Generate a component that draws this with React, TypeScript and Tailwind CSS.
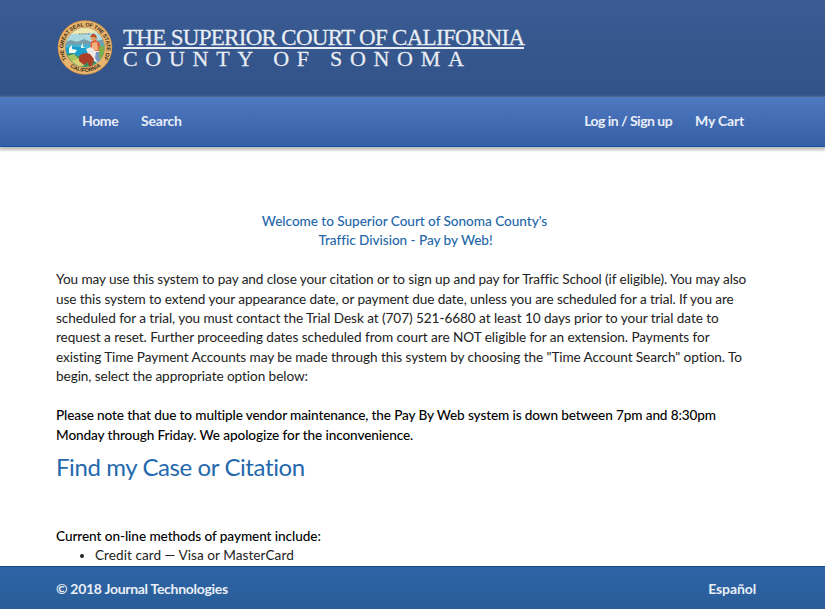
const intro = [
  { text: 'You may use this system to pay and close your citation or to sign up and pay for Traffic School (if eligible). You may also', tracking: 'tracking-[-0.092px]' },
  { text: 'use this system to extend your appearance date, or payment due date, unless you are scheduled for a trial. If you are', tracking: 'tracking-[-0.085px]' },
  { text: 'scheduled for a trial, you must contact the Trial Desk at (707) 521-6680 at least 10 days prior to your trial date to', tracking: 'tracking-[-0.068px]' },
  { text: 'request a reset. Further proceeding dates scheduled from court are NOT eligible for an extension. Payments for', tracking: 'tracking-[-0.055px]' },
  { text: 'existing Time Payment Accounts may be made through this system by choosing the "Time Account Search" option. To', tracking: 'tracking-[-0.08px]' },
  { text: 'begin, select the appropriate option below:', tracking: 'tracking-[-0.07px]' },
];

function Seal() {
  return (
    <svg viewBox="0 0 56 56" className="h-14 w-14 shrink-0">
      <defs>
        <clipPath id="scene"><circle cx="28" cy="27.5" r="19.4" /></clipPath>
        <path id="topArc" d="M9.7 39.5 A21.6 21.6 0 1 1 46.3 39.5" />
        <path id="bottomArc" d="M11.5 45.5 A24.5 24.5 0 0 0 44.5 45.5" />
      </defs>
      <circle cx="28" cy="27.5" r="27.3" fill="#c58b46" />
      <circle cx="28" cy="27.5" r="26.6" fill="#e9b46c" />
      <circle cx="28" cy="27.5" r="19.9" fill="#a97c3c" />
      <g clipPath="url(#scene)">
        <rect width="56" height="56" fill="#b9dfe5" />
        <path d="M8 6H48V15Q37 11 28 14T8 20Z" fill="#eee7b0" />
        <path d="M8 17Q18 11 28 16T48 15V22H8Z" fill="#a9d8df" />
        <path d="M8 22L14 20L20 22L27 19L34 22L48 19V27H8Z" fill="#779eaa" />
        <path d="M8 24.500H48V40H8Z" fill="#43b5d4" />
        <path d="M8 28Q20 25 31 29L29 36L8 35Z" fill="#1b9fc9" />
        <path d="M12 28L15 25V29L20 30L18 33H12Z" fill="#f4faf2" />
        <path d="M24 26L26 23V27L29 28H24Z" fill="#e7f5ef" />
        <path d="M8 34Q17 32 22 37L30 36L48 32V50H8Z" fill="#378e62" />
        <path d="M10 36L17 34L22 39L17 44Z" fill="#a9c45a" />
        <path d="M15 41L23 38L28 45L22 47Z" fill="#d8d176" />
        <path d="M34 22L38 19L43 24L44 33L39 39L32 34Z" fill="#e75b39" />
        <path d="M35 23L40 22L41 30L35 31Z" fill="#f1b27f" />
        <circle cx="36.500" cy="17.500" r="3" fill="#dca268" />
        <path d="M33.500 16Q36.500 11 39.500 16V20L38 17H33.500Z" fill="#b9522b" />
        <path d="M29 29L34 27L38 31L43 31L46 37L40 43L33 38Z" fill="#edeae5" />
        <path d="M39 32L44 32L46 38L41 43L38 38Z" fill="#7695c4" />
        <path d="M22 36Q27 31 33 34L37 39L35 47H32L31 42L27 45L22 41Z" fill="#ac3f27" />
        <path d="M42 27L48 25V41L42 38Z" fill="#7cae4c" />
        <path d="M22 14H34" stroke="#49758b" strokeWidth="1" strokeDasharray="1 .5" />
      </g>
      <g fill="#3d311b" fontFamily="Liberation Sans, sans-serif" fontWeight="bold" fontSize="5.4">
        <text><textPath href="#topArc" textLength="91">THE GREAT SEAL OF THE STATE OF</textPath></text>
        <text><textPath href="#bottomArc" startOffset="2" textLength="33">CALIFORNIA</textPath></text>
      </g>
    </svg>
  );
}

export default function App() {
  return (
    <div className="flex h-[609px] w-[825px] flex-col overflow-hidden bg-white font-['Lato',sans-serif] text-[13.6px] leading-[19.4px] text-[#222]">
      <header className="flex h-[97px] shrink-0 bg-linear-to-b from-[#3a5b93] to-[#325389] pt-5 pl-[57px]">
        <Seal />
        <div className="ml-[10px] pt-[7px] font-['Liberation_Serif',serif] text-[22px] whitespace-nowrap text-[#e9edf4] [-webkit-text-stroke:0.3px_#e9edf4] [text-shadow:0_0_1px_#173c78]">
          <div className="h-[22px] w-[401px] border-b-2 border-[#e9edf4] text-[23px] leading-[22px] tracking-[-0.7px]">THE SUPERIOR COURT OF CALIFORNIA</div>
          <div className="h-[22px] leading-[20px] tracking-[7.7px]">COUNTY OF SONOMA</div>
        </div>
      </header>
      <nav className="flex h-[50px] shrink-0 items-center border-b border-[#1750a0] bg-linear-to-b from-[#4e78c0] to-[#365fa5] pr-[81px] pb-px pl-[82px] text-[14px] font-bold text-[#e8edf8] shadow-[0_2px_3px_1px_#bbb]">
        <span className="w-[59px] tracking-[-0.4px]">Home</span>
        <span className="tracking-[-0.2px]">Search</span>
        <span className="ml-auto tracking-[-0.52px]">Log in / Sign up</span>
        <span className="ml-[23px] tracking-[-0.2px]">My Cart</span>
      </nav>
      <main className="flex-1 overflow-hidden pt-[64.6px] pl-14 whitespace-nowrap">
        <h1 className="w-[697px] text-center font-medium tracking-[-0.04px] text-[#2467aa]">
          <div>Welcome to Superior Court of Sonoma County's</div>
          <div className="pl-[2px]">Traffic Division - Pay by Web!</div>
        </h1>
        <div className="mt-[19.8px]">
          {intro.map((line) => <div key={line.text} className={line.tracking}>{line.text}</div>)}
        </div>
        <div className="mt-[19.6px] font-medium tracking-[-0.12px] text-black">
          <div>Please note that due to multiple vendor maintenance, the Pay By Web system is down between 7pm and 8:30pm</div>
          <div className="tracking-[-0.09px]">Monday through Friday. We apologize for the inconvenience.</div>
        </div>
        <h2 className="mt-[8px] text-[24px] leading-[27px] tracking-[-0.4px] text-[#2468ad]">Find my Case or Citation</h2>
        <p className="mt-[47px] font-medium tracking-[-0.07px] text-black">Current on-line methods of payment include:</p>
        <ul className="list-disc pl-[39px] tracking-[0.04px]"><li>Credit card — Visa or MasterCard</li></ul>
      </main>
      <footer className="flex h-[43px] shrink-0 items-center justify-between border-t border-[#164b8e] bg-linear-to-b from-[#2c64a6] to-[#2a5d98] pt-[2px] pr-[69px] pl-14 text-[14px] font-bold text-[#e9eef7]">
        <span className="tracking-[-0.29px]">© 2018 Journal Technologies</span>
        <span className="tracking-[-0.12px]">Español</span>
      </footer>
    </div>
  );
}
